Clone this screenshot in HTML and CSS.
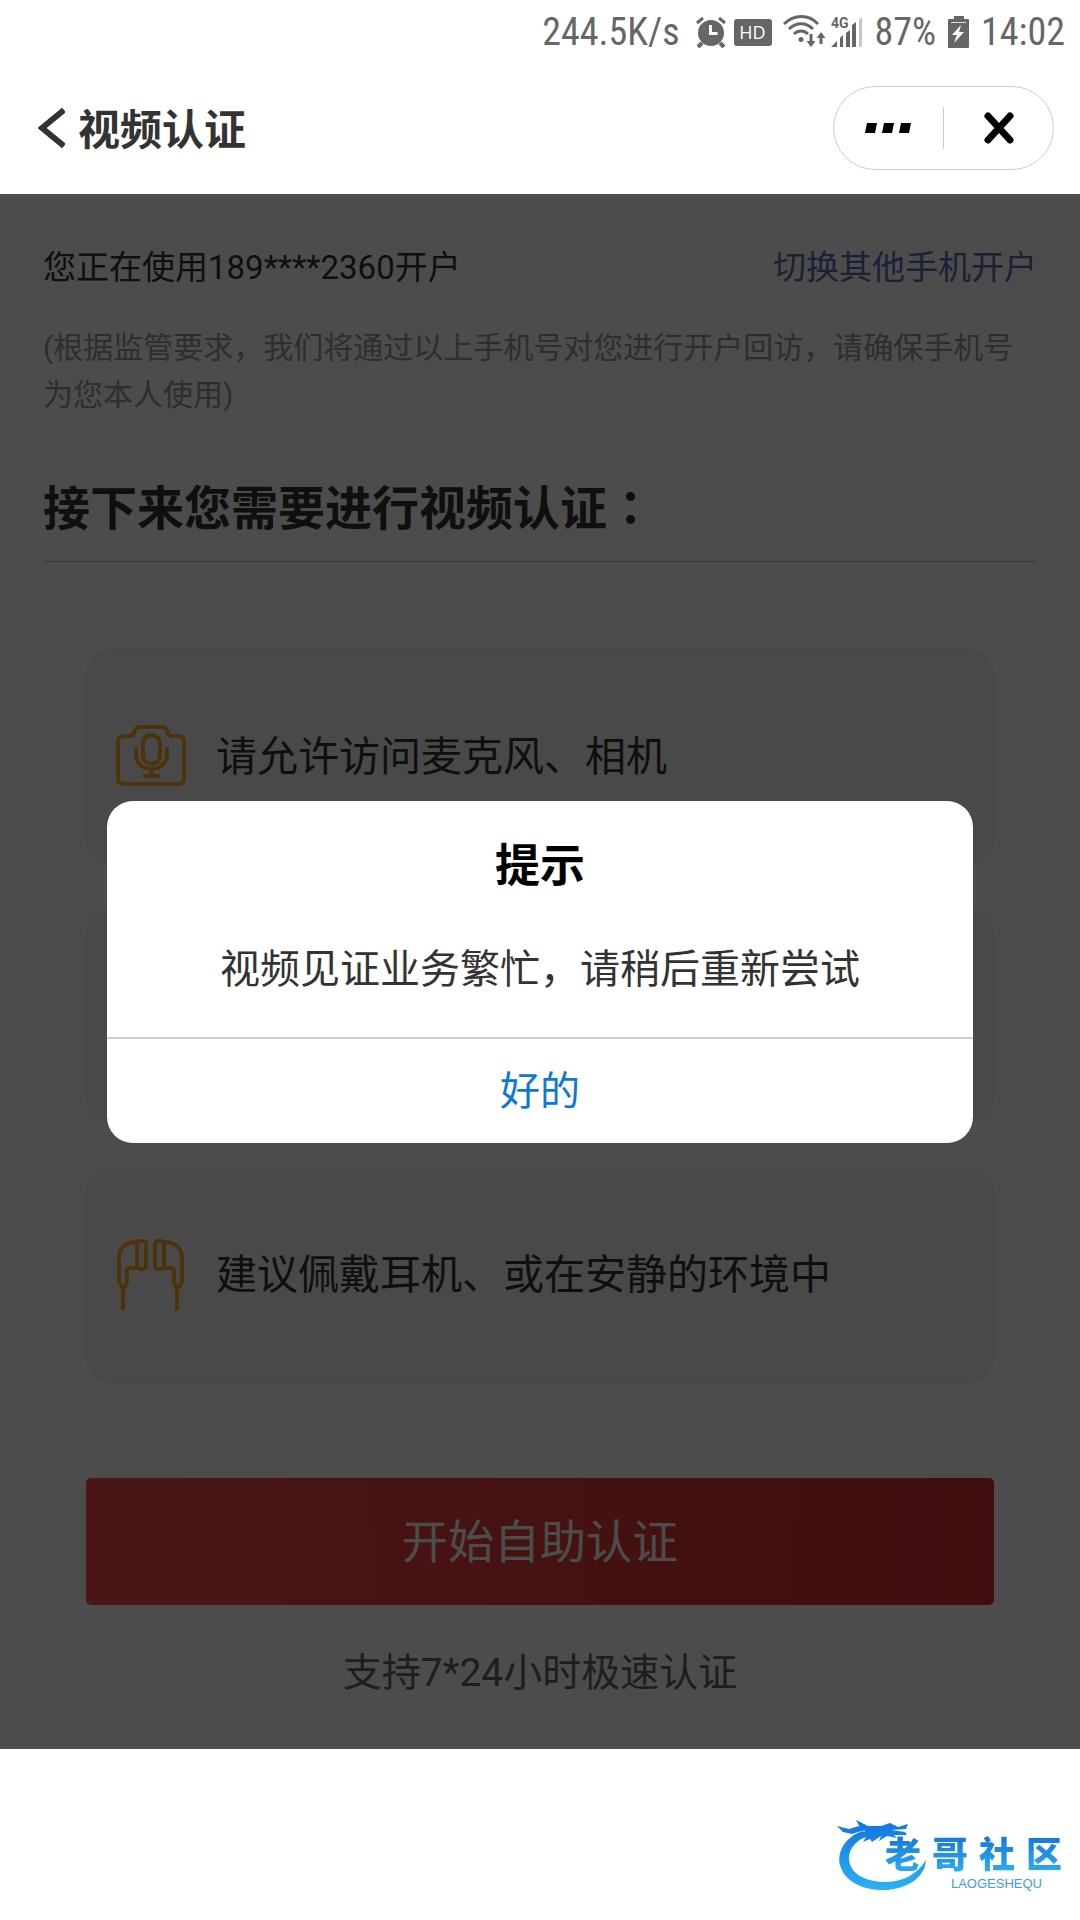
FILE: index.html
```html
<!DOCTYPE html>
<html lang="zh-CN">
<head>
    <meta charset="UTF-8">
    <meta name="viewport" content="width=device-width, initial-scale=1.0">
    <title>视频认证</title>
    <link rel="stylesheet" href="styles.css">
</head>
<body>
    <div class="status-bar">
        <span>244.5K/s</span>
        <svg class="icon-alarm" width="30" height="32" viewBox="0 0 30 32" fill="none" stroke="#666">
            <circle cx="15" cy="17" r="13" fill="#666" stroke="none"/>
            <path d="M1 7l6-5M29 7l-6-5" stroke-width="3"/>
            <path d="M6 27l-4 4M24 27l4 4" stroke-width="4"/>
            <path d="M14.500 9v8.500h7" stroke="#fff" stroke-width="3"/>
        </svg>
        <span class="hd">HD</span>
        <svg class="icon-wifi" width="43" height="34" viewBox="0 0 43 34" fill="none" stroke="#666" stroke-width="3">
            <path d="M1 9c10-10 25-10 34 0M6 14c7-7 17-7 24 0M11 19c4-4 10-4 14 0"/>
            <circle cx="18" cy="24.500" r="2.500" fill="#666" stroke="none"/>
            <path d="M28 19v9M38 29V20" stroke-width="3"/>
            <path d="M23.500 26h9L28 32zM33.500 23h9L38 17z" fill="#666" stroke="none"/>
        </svg>
        <svg class="icon-signal" width="32" height="32" viewBox="0 0 32 32" fill="#666">
            <text x="0" y="12" class="signal-label">4G</text>
            <path d="M0 31l6-6v6zM9 22l3-3v12H9zM15 17l4-3v17h-4zM21 9l4-3v25h-4z"/>
            <path d="M28 4l3-3v30h-3z" fill="#c8c8c8"/>
        </svg>
        <span>87%</span>
        <svg class="icon-battery" width="21" height="32" viewBox="0 0 21 32">
            <path d="M6 0h10v3h4a1 1 0 0 1 1 1v27a1 1 0 0 1-1 1H1a1 1 0 0 1-1-1V4a1 1 0 0 1 1-1h5z" fill="#666"/>
            <path d="M3 6h15v1H3z" fill="#ddd"/>
            <path d="M13 9L4 19h5l-3 8 10-11h-5z" fill="#fff"/>
        </svg>
        <span>14:02</span>
    </div>

    <header class="nav-bar">
        <button class="back" type="button" aria-label="返回">
            <svg width="27" height="40" viewBox="0 0 27 40" fill="none" stroke="#333" stroke-width="6">
                <path d="M26 2L4 20l22 18"/>
            </svg>
        </button>
        <h1>视频认证</h1>
        <div class="capsule">
            <button type="button" aria-label="更多">
                <svg width="48" height="10" viewBox="0 0 48 10">
                    <path d="M2 0h10l-2 10H0zM19 0h10l-2 10H17zM36 0h10l-2 10H34z"/>
                </svg>
            </button>
            <button type="button" aria-label="关闭">
                <svg width="30" height="32" viewBox="0 0 30 32" fill="none" stroke="#000" stroke-width="7" stroke-linecap="round">
                    <path d="M4 4l22 24M26 4L4 28"/>
                </svg>
            </button>
        </div>
    </header>

    <main class="stage">
        <div class="phone-row">
            <span>您正在使用189****2360开户</span>
            <a href="#">切换其他手机开户</a>
        </div>
        <p class="note">(根据监管要求，我们将通过以上手机号对您进行开户回访，请确保手机号为您本人使用)</p>
        <h2>接下来您需要进行视频认证<span class="colon" lang="zh-TW">：</span></h2>

        <ul class="tips">
            <li>
                <svg class="tip-icon" width="72" height="72" viewBox="0 0 72 72" fill="none" stroke="#ffac28" stroke-width="4">
                    <path d="M9 15h7q2 0 3-3l2-4q1-2 3-2h24q2 0 3 2l2 4q1 3 3 3h7q6 0 6 6v36q0 6-6 6H9q-6 0-6-6V21q0-6 6-6z"/>
                    <rect x="28" y="14" width="17" height="29" rx="8"/>
                    <path d="M21 26v7c0 20 31 20 31 0v-7M36.500 48v7M28 55h17"/>
                </svg>
                <span>请允许访问麦克风、相机</span>
            </li>
            <li></li>
            <li>
                <svg class="tip-icon" width="72" height="72" viewBox="0 0 72 72" fill="none" stroke="#ffac28" stroke-width="4">
                    <path d="M22 3C10 3 4 10 4 19v24l3 5h3l2-5V32q0-3 3-3h7M8 48v23"/>
                    <rect x="22" y="2" width="9" height="28" rx="3"/>
                    <path d="M49 3c12 0 18 7 18 16v24l-3 5h-3l-2-5V32q0-3-3-3h-7M62 48v23"/>
                    <rect x="40" y="2" width="9" height="28" rx="3"/>
                </svg>
                <span>建议佩戴耳机、或在安静的环境中</span>
            </li>
        </ul>

        <button class="start" type="button">开始自助认证</button>
        <p class="support">支持7*24小时极速认证</p>

        <div class="mask">
            <div class="dialog" role="dialog" aria-labelledby="dialog-title">
                <h3 id="dialog-title">提示</h3>
                <p>视频见证业务繁忙，请稍后重新尝试</p>
                <button type="button">好的</button>
            </div>
        </div>
    </main>

    <footer class="footer">
        <div class="logo">
            <svg width="92" height="78" viewBox="0 0 92 78">
                <defs>
                    <linearGradient id="dragon" x1="0" y1="0" x2="0" y2="78" gradientUnits="userSpaceOnUse">
                        <stop offset="0" stop-color="#1070dc"/>
                        <stop offset="1" stop-color="#2cb4f4"/>
                    </linearGradient>
                </defs>
                <g fill="url(#dragon)">
                    <path d="M26 16C7 22 0 38 3 50c5 18 25 26 47 25 22-2 38-13 39-30-9 15-24 22-41 22-20 0-36-9-36-24 0-10 8-19 20-22z"/>
                    <path d="M19 5l12 6 13 0 9-3 8 4 10-3-2 5-15 1 14 2 2 3-13 0 3 3-10-2-8 5 2-5-9 6-2-3-7 3 4-7-9 3 7-7-4-2z"/>
                    <path d="M0 11l12 3 10-3 6 4-13 4-9-2z"/>
                </g>
            </svg>
            <div class="logo-text">
                <div class="logo-name"><span>老</span><span>哥</span><span>社</span><span>区</span></div>
                <div class="logo-latin">LAOGESHEQU</div>
            </div>
        </div>
    </footer>
</body>
</html>
```
FILE: styles.css
```css
* {
    box-sizing: border-box;
}
body {
    margin: 0;
    background: #fff;
    color: #333;
    font-family: Roboto, "Noto Sans CJK SC", sans-serif;
}
h1, h2, h3, p, ul {
    margin: 0;
    padding: 0;
}
button {
    padding: 0;
    border: none;
    background: none;
    font-family: inherit;
    cursor: pointer;
}
svg {
    display: block;
    flex: none;
}

/* status bar */
.status-bar {
    display: flex;
    justify-content: flex-end;
    align-items: center;
    height: 64px;
    padding-right: 15px;
    color: #666;
    font-family: "Roboto Condensed", Roboto, sans-serif;
    font-size: 38px;
}
.icon-alarm {
    margin-left: 16px;
}
.hd {
    width: 38px;
    margin-left: 8px;
    border-radius: 3px;
    background: #666;
    color: #fff;
    font-family: "Open Sans", sans-serif;
    font-size: 18px;
    line-height: 27px;
    text-align: center;
}
.icon-wifi {
    margin-left: 11px;
}
.icon-signal {
    margin: 0 12px 0 5px;
}
.signal-label {
    font: bold 14px Roboto, sans-serif;
}
.icon-battery {
    margin: 0 12px;
}

/* title bar */
.nav-bar {
    display: flex;
    align-items: center;
    height: 130px;
    padding: 0 26px 2px 38px;
}
.nav-bar h1 {
    margin-left: 13px;
    padding-top: 6px;
    font-size: 42px;
    font-weight: 700;
    line-height: 60px;
}
.capsule {
    display: flex;
    align-items: center;
    width: 221px;
    height: 84px;
    margin-left: auto;
    border: 1px solid #ccc;
    border-radius: 42px;
}
.capsule button {
    display: flex;
    flex: 1;
    justify-content: center;
    align-items: center;
    height: 42px;
}
.capsule button + button {
    border-left: 1px solid #ccc;
}

/* page content */
.stage {
    position: relative;
    padding: 50px 43px 46px;
}
.phone-row {
    display: flex;
    justify-content: space-between;
    font-size: 33px;
    line-height: 48px;
}
.phone-row a {
    color: #576bb5;
    text-decoration: none;
}
.note {
    margin-top: 32px;
    color: #999;
    font-size: 30px;
    line-height: 47px;
}
h2 {
    margin-top: 52px;
    padding-bottom: 17px;
    border-bottom: 1px solid #bbb;
    font-size: 47px;
    line-height: 70px;
}
.colon {
    font-family: "Noto Sans CJK TC", sans-serif;
}
.tips {
    display: flex;
    flex-direction: column;
    gap: 43px;
    margin: 87px 43px 0;
    list-style: none;
}
.tips li {
    display: flex;
    align-items: center;
    height: 216px;
    padding-left: 29px;
    border-radius: 26px;
    background: #f5f5f5;
    font-size: 41px;
}
.tips span {
    padding-bottom: 8px;
}
.tip-icon {
    margin-right: 29px;
}
.start {
    display: block;
    width: calc(100% - 86px);
    height: 127px;
    margin: 95px 43px 0;
    padding-bottom: 8px;
    border-radius: 5px;
    background: linear-gradient(to right, #f64848, #d83030);
    color: #fff;
    font-size: 46px;
}
.support {
    margin-top: 38px;
    color: #666;
    font-size: 39px;
    line-height: 60px;
    text-align: center;
}

/* dialog over the content */
.mask {
    position: absolute;
    inset: 0;
    display: flex;
    justify-content: center;
    align-items: center;
    background: rgba(0, 0, 0, 0.7);
}
.dialog {
    width: 866px;
    max-width: 90%;
    border-radius: 26px;
    background: #fff;
    text-align: center;
}
.dialog h3 {
    padding-top: 32px;
    color: #000;
    font-size: 45px;
    line-height: 68px;
}
.dialog p {
    padding: 39px 30px 37px;
    font-size: 40px;
    line-height: 60px;
}
.dialog button {
    width: 100%;
    height: 106px;
    padding-bottom: 6px;
    border-top: 2px solid #d0d0d0;
    color: #0e78d8;
    font-size: 40px;
}

/* site logo */
.footer {
    display: flex;
    justify-content: flex-end;
    padding: 66px 18px 24px;
}
.logo {
    display: flex;
}
.logo-text {
    margin: 12px 0 0 -44px;
    font-family: "Noto Sans CJK SC", sans-serif;
}
.logo-name {
    display: flex;
    gap: 11px;
    background: linear-gradient(#1878dc 20%, #2cb4f4);
    background-clip: text;
    -webkit-background-clip: text;
    color: transparent;
    font-size: 36px;
    font-weight: 900;
    line-height: 50px;
}
.logo-latin {
    padding-right: 20px;
    color: #3c9ce4;
    font-family: "Liberation Sans", sans-serif;
    font-size: 13px;
    line-height: 13px;
    text-align: right;
}
```
